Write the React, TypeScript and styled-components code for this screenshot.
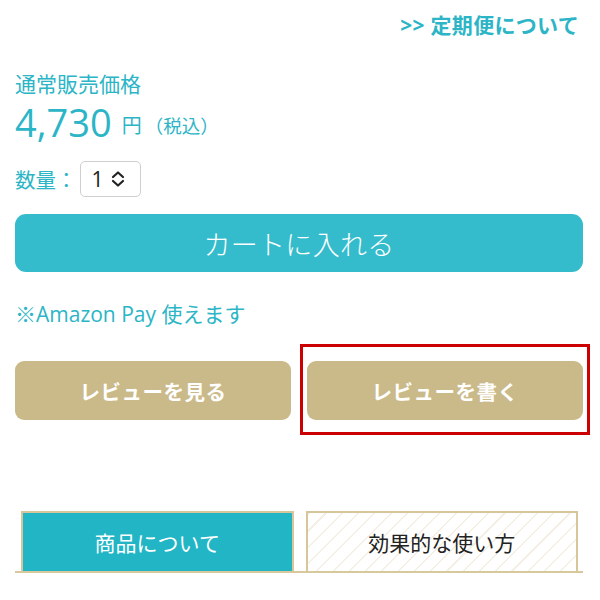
import React from "react";
import styled, { createGlobalStyle } from "styled-components";

const GlobalStyle = createGlobalStyle`
  html, body {
    margin: 0;
    padding: 0;
    background: #ffffff;
    font-family: "Open Sans", "Noto Sans CJK JP", sans-serif;
  }
`;

const Page = styled.div`
  width: 600px;
  height: 600px;
  overflow: hidden;
  box-sizing: border-box;
  padding: 0 17px 0 15px;
  display: flex;
  flex-direction: column;
`;

const TopBar = styled.div`
  height: 48px;
  display: flex;
  align-items: center;
  justify-content: flex-end;
  padding-right: 4px;
`;

const TeikiLink = styled.a`
  color: #2bb5c6;
  font-size: 21px;
  font-weight: 700;
  text-decoration: none;
  letter-spacing: 0.3px;
`;

const PriceLabel = styled.div`
  margin-top: 24px;
  color: #2bb5c6;
  font-size: 21px;
  line-height: 24px;
`;

const PriceRow = styled.div`
  display: flex;
  align-items: center;
  margin-top: 6px;
  height: 40px;
  color: #2bb5c6;
`;

const Amount = styled.span`
  font-size: 38px;
  font-weight: 400;
  line-height: 40px;
`;

const Yen = styled.span`
  font-size: 20px;
  line-height: 24px;
  margin-left: 10px;
  margin-top: 8px;
`;

const Tax = styled.span`
  font-size: 18.5px;
  line-height: 24px;
  margin-left: 3px;
  margin-top: 8px;
`;

const QtyRow = styled.div`
  display: flex;
  align-items: center;
  margin-top: 19px;
  color: #2bb5c6;
  font-size: 20.5px;
`;

const QtyLabel = styled.span`
  margin-right: 3px;
`;

const Select = styled.div`
  box-sizing: border-box;
  width: 61px;
  height: 36px;
  border: 1.5px solid #cfcfcf;
  border-radius: 5px;
  display: flex;
  align-items: center;
  padding-left: 11px;
  gap: 7px;
  color: #222;
  font-size: 21px;
  font-family: "Open Sans", sans-serif;
`;

const CartButton = styled.button`
  margin-top: 17px;
  height: 58px;
  width: 100%;
  border: none;
  border-radius: 11px;
  background: #35bccc;
  color: #ffffff;
  font-family: "Noto Sans CJK JP", sans-serif;
  font-size: 27px;
  font-weight: 300;
  letter-spacing: 0.3px;
  cursor: pointer;
`;

const AmazonNote = styled.div`
  margin-top: 28px;
  color: #2bb5c6;
  font-size: 21px;
  line-height: 28px;
`;

const ReviewRow = styled.div`
  margin-top: 33px;
  display: grid;
  grid-template-columns: 1fr 1fr;
  gap: 16px;
`;

const ReviewSlot = styled.div`
  position: relative;
`;

const ReviewButton = styled.button`
  width: 100%;
  height: 59px;
  border: none;
  border-radius: 9px;
  background: #cbba89;
  color: #ffffff;
  font-family: "Noto Sans CJK JP", sans-serif;
  font-size: 20.5px;
  font-weight: 700;
  letter-spacing: 0.5px;
  cursor: pointer;
`;

const Highlight = styled.div`
  position: absolute;
  left: -7px;
  right: -7px;
  top: -17px;
  bottom: -15px;
  border: 3px solid #cc0000;
  pointer-events: none;
`;

const Tabs = styled.div`
  margin-top: 91px;
  display: grid;
  grid-template-columns: 1fr 1fr;
  gap: 12px;
  padding: 0 5px 0 6px;
  border-bottom: 2px solid #d8c99c;
`;

const Tab = styled.div<{ $active?: boolean }>`
  box-sizing: border-box;
  height: 60px;
  border: 2px solid #d6c699;
  border-bottom: none;
  display: flex;
  align-items: center;
  justify-content: center;
  font-family: "Noto Sans CJK JP", sans-serif;
  font-size: 21px;
  color: ${(p) => (p.$active ? "#ffffff" : "#222222")};
  background: ${(p) =>
    p.$active
      ? "#22b5c5"
      : "repeating-linear-gradient(-45deg, #ffffff 0px, #ffffff 10px, #f4f0e5 10px, #f4f0e5 11.5px)"};
`;

const ChevronUpDown = () => (
  <svg width="14" height="18" viewBox="0 0 14 18" fill="none">
    <path d="M2 7 L7 2.5 L12 7" stroke="#222" strokeWidth="2.2" strokeLinecap="round" strokeLinejoin="round" />
    <path d="M2 11 L7 15.5 L12 11" stroke="#222" strokeWidth="2.2" strokeLinecap="round" strokeLinejoin="round" />
  </svg>
);

export default function App() {
  return (
    <>
      <GlobalStyle />
      <Page>
        <TopBar>
          <TeikiLink href="#">&gt;&gt; 定期便について</TeikiLink>
        </TopBar>
        <PriceLabel>通常販売価格</PriceLabel>
        <PriceRow>
          <Amount>4,730</Amount>
          <Yen>円</Yen>
          <Tax>（税込）</Tax>
        </PriceRow>
        <QtyRow>
          <QtyLabel>数量：</QtyLabel>
          <Select>
            <span>1</span>
            <ChevronUpDown />
          </Select>
        </QtyRow>
        <CartButton>カートに入れる</CartButton>
        <AmazonNote>※Amazon Pay 使えます</AmazonNote>
        <ReviewRow>
          <ReviewSlot>
            <ReviewButton>レビューを見る</ReviewButton>
          </ReviewSlot>
          <ReviewSlot>
            <ReviewButton>レビューを書く</ReviewButton>
            <Highlight />
          </ReviewSlot>
        </ReviewRow>
        <Tabs>
          <Tab $active>商品について</Tab>
          <Tab>効果的な使い方</Tab>
        </Tabs>
      </Page>
    </>
  );
}
